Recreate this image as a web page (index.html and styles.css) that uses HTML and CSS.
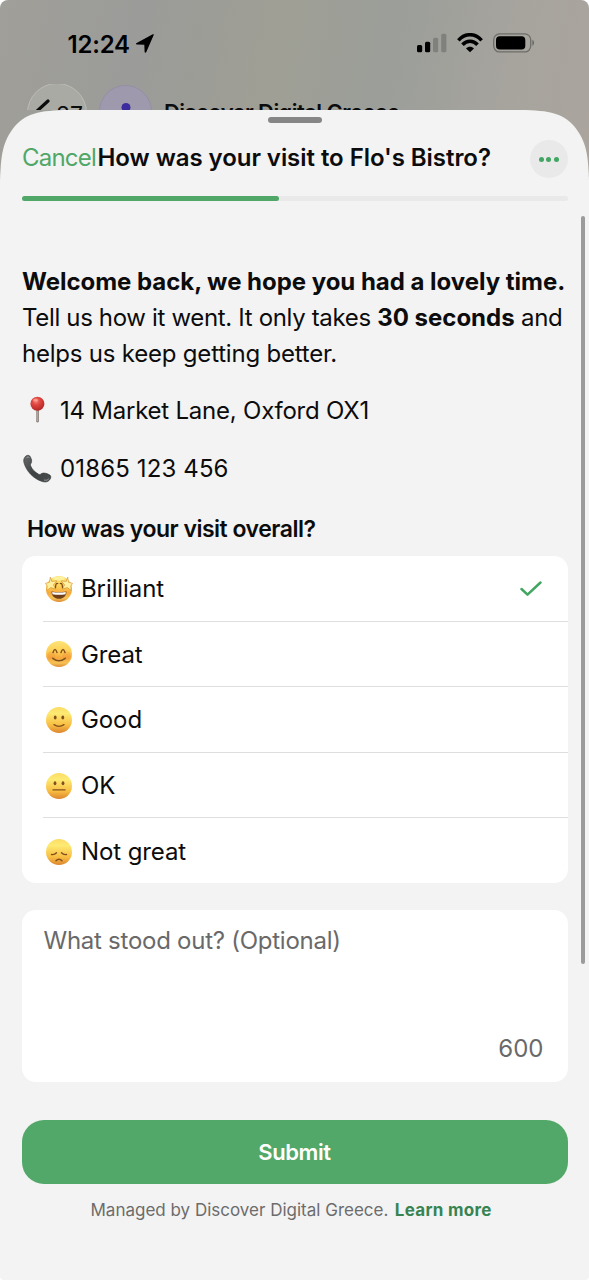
FILE: index.html
```html
<!DOCTYPE html>
<html lang="en">
<head>
<meta charset="utf-8">
<title>How was your visit to Flo's Bistro?</title>
<link rel="stylesheet" href="styles.css">
</head>
<body>
<svg class="defs" width="0" height="0" aria-hidden="true">
  <defs>
    <linearGradient id="face" x1="0" y1="0" x2="0" y2="1">
      <stop offset="0" stop-color="#fbdc66"/><stop offset=".25" stop-color="#fdea72"/><stop offset=".7" stop-color="#f8bd43"/><stop offset="1" stop-color="#dc8630"/>
    </linearGradient>
    <linearGradient id="blush" x1="0" y1="0" x2="0" y2="1">
      <stop offset="0" stop-color="#fce477"/><stop offset=".4" stop-color="#fdcf55"/><stop offset=".65" stop-color="#f5a83c"/><stop offset=".85" stop-color="#f6c255"/><stop offset="1" stop-color="#dc8a35"/>
    </linearGradient>
    <radialGradient id="red" cx=".4" cy=".3" r=".7">
      <stop offset="0" stop-color="#f6877c"/><stop offset=".4" stop-color="#e04740"/><stop offset="1" stop-color="#b52727"/>
    </radialGradient>
    <linearGradient id="phone" x1="0" y1="0" x2="1" y2="1">
      <stop offset="0" stop-color="#666a6b"/><stop offset=".5" stop-color="#3e4243"/><stop offset="1" stop-color="#4a4e4f"/>
    </linearGradient>
  </defs>
</svg>
<div class="screen">
  <header class="backdrop">
    <div class="status">
      <span class="time">12:24</span>
      <svg class="location" width="20" height="20" viewBox="0 0 20 20"><path d="M18.7.9 11.300 18.100c-.5 1-1.600.8-1.700-.3l-.3-7-7-.3C.8 10.400.6 9.400 1.700 8.900L17.300.5c1.200-.6 1.800-.4 1.400.4Z"/></svg>
      <div class="indicators">
        <svg width="30" height="20" viewBox="0 0 30 20"><rect x="0" y="12" width="5.200" height="7.300" rx="1.500"/><rect x="8" y="8.700" width="5.200" height="10.600" rx="1.500"/><g fill="#80817e"><rect x="16" y="4.700" width="5.200" height="14.600" rx="1.500"/><rect x="24.200" y=".8" width="5.200" height="18.500" rx="1.500"/></g></svg>
        <svg width="26" height="20" viewBox="0 0 26 20"><g fill="none" stroke="#000" stroke-width="3.500"><path d="M1.400 7.300C8-.2 18-.2 24.600 7.300"/><path d="M5.500 11.800c4.300-4.700 10.700-4.700 15 0"/></g><path d="M9 15.400c2.200-2.300 5.800-2.300 8 0L13 19.300Z"/></svg>
        <svg width="42" height="20" viewBox="0 0 42 20"><rect x=".7" y=".9" width="37" height="18" rx="5.800" fill="none" stroke="#6d6d69" stroke-width="1.300"/><rect x="3" y="3.200" width="29.300" height="13.400" rx="3.800"/><path d="M39.300 6.700c2.400.8 2.400 5.200 0 6Z" fill="#6d6d69"/></svg>
      </div>
    </div>
    <div class="chatbar">
      <div class="back"><svg width="16" height="26" viewBox="0 0 16 26"><path d="M14 2 2 13l12 11" fill="none" stroke="#0c0c0c" stroke-width="3.200" stroke-linecap="round" stroke-linejoin="round"/></svg><span>27</span></div>
      <div class="avatar"><svg width="30" height="36" viewBox="0 0 30 36"><circle cx="15" cy="4.500" r="4.500"/><path d="M4 32c0-28 22-28 22 0Z"/></svg></div>
      <div class="chatname">Discover Digital Greece</div>
    </div>
  </header>
  <main class="sheet">
    <div class="grabber"></div>
    <nav class="nav">
      <span class="cancel">Cancel</span>
      <h1 class="title">How was your visit to Flo's Bistro?</h1>
      <span class="more"><i></i><i></i><i></i></span>
    </nav>
    <div class="progress"><div class="bar"></div></div>
    <section class="intro">
      <div class="line"><b class="welcome">Welcome back, we hope you had a lovely time.</b></div>
      <div class="line tell">Tell us how it went. It only takes <b>30 seconds</b> and</div>
      <div class="line helps">helps us keep getting better.</div>
    </section>
    <div class="contact">
      <svg width="30" height="30" viewBox="0 0 30 30"><path d="M14 12h3v13.500q-1.500 2-3 0Z" fill="#958b86"/><path d="M14.600 13h.9v12h-.9Z" fill="#c5bfbb"/><circle cx="15.400" cy="7.700" r="7" fill="url(#red)"/><ellipse cx="13.600" cy="4.200" rx="2.400" ry="1.300" fill="#ffb1a8" opacity=".65"/></svg>
      <span class="address">14 Market Lane, Oxford OX1</span>
    </div>
    <div class="contact phone">
      <svg width="30" height="30" viewBox="0 0 30 30"><path d="M2.500 3.700C4 1 7 .5 8.300 2.800c1.300 2.300 1.700 4.300 1 6-.5 1.300-1.300 1.500-.6 3.200 1.400 3.300 4.400 6.400 7.900 8.200 1.500.7 2-.2 3.300-.8 2-.9 5.400 0 8 1.700 1.300.9 1.200 3-.2 4.700-1.600 2.100-4.400 2.700-7.500 1.700C11.200 24.700 4.300 17.100 2 8.800c-.5-2-.3-3.700.5-5.100Z" fill="url(#phone)" stroke="#2d3132" stroke-width=".6"/><path d="M4.200 4.200c1-1.500 2.500-1.600 3.300-.4M22 26c2 .6 3.700.2 4.800-1.200" stroke="#999d9d" fill="none" stroke-width="1"/></svg>
      <span class="number">01865 123 456</span>
    </div>
    <h2 class="question">How was your visit overall?</h2>
    <div class="options">
      <div class="option">
        <svg class="emoji" viewBox="0 0 28 28"><circle cx="14" cy="14" r="13" fill="url(#blush)"/><ellipse cx="14" cy="3.500" rx="6" ry="2" fill="#fff6a8" opacity=".8"/><path d="M6.500 16.500q7.500 1.600 15 0c.1 4-3 7.300-7.500 7.300s-7.600-3.300-7.500-7.300Z" fill="#704018"/><path d="M7.200 16.900q6.800 1.300 13.600 0l-.3 2.300q-6.500 1.200-13 0Z" fill="#fff"/><g fill="#fff0a0" stroke="#cf882a" stroke-width=".6" stroke-linejoin="round"><path d="m5.300 2.200 1.500 4.200 5.100-.5-3.500 4 2.300 4.200-5-1.500-4 3 .5-4.600L.5 8.400l4-1.200Z"/><path d="m22.700 2.200-1.500 4.200-5.100-.5 3.500 4-2.300 4.200 5-1.500 4 3-.5-4.600 1.700-2.600-4-1.200Z"/></g><g fill="none" stroke="#80501c" stroke-width="1.300" stroke-linecap="round"><path d="M10.500 12.500q.2-5 2.200-4M17.500 12.500q-.2-5-2.200-4"/></g></svg>
        <span class="l1">Brilliant</span>
        <svg class="check" width="22" height="16" viewBox="0 0 22 16"><path d="m1.500 8 6 5.700L20.500 1.500" fill="none" stroke="#43a563" stroke-width="2.500" stroke-linecap="round" stroke-linejoin="round"/></svg>
      </div>
      <div class="option">
        <svg class="emoji" viewBox="0 0 28 28"><circle cx="14" cy="14" r="13" fill="url(#blush)"/><circle cx="6.500" cy="15.500" r="4" fill="#f38237" opacity=".25"/><circle cx="21.500" cy="15.500" r="4" fill="#f38237" opacity=".25"/><g fill="none" stroke="#80501c" stroke-width="1.500" stroke-linecap="round"><path d="M8 12.500q2-6 4 0M16 12.500q2-6 4 0M7.800 18.300q6.200 4.800 12.400 0"/></g></svg>
        <span class="l2">Great</span>
      </div>
      <div class="option">
        <svg class="emoji" viewBox="0 0 28 28"><circle cx="14" cy="14" r="13" fill="url(#face)"/><ellipse cx="10.200" cy="11.400" rx="1.400" ry="2" fill="#80501c"/><ellipse cx="17.800" cy="11.400" rx="1.400" ry="2" fill="#80501c"/><path d="M9 18.600q5 3.400 10 0" fill="none" stroke="#80501c" stroke-width="1.300" stroke-linecap="round"/></svg>
        <span class="l3">Good</span>
      </div>
      <div class="option">
        <svg class="emoji" viewBox="0 0 28 28"><circle cx="14" cy="14" r="13" fill="url(#face)"/><ellipse cx="10" cy="11.200" rx="1.400" ry="2" fill="#80501c"/><ellipse cx="18" cy="11.200" rx="1.400" ry="2" fill="#80501c"/><path d="M8 17.900h12" fill="none" stroke="#80501c" stroke-width="1.400" stroke-linecap="round"/></svg>
        <span class="l4">OK</span>
      </div>
      <div class="option">
        <svg class="emoji" viewBox="0 0 28 28"><circle cx="14" cy="14" r="13" fill="url(#face)"/><g fill="none" stroke="#80501c" stroke-width="1.400" stroke-linecap="round"><path d="M6.500 16.500q3 .5 5-1.700M16.500 14.800q2 2.200 5 1.700M11 22.800q3-3.200 6 0"/></g></svg>
        <span class="l5">Not great</span>
      </div>
    </div>
    <div class="comment">
      <span class="placeholder">What stood out? (Optional)</span>
      <span class="count">600</span>
    </div>
    <div class="submit"><span>Submit</span></div>
    <footer class="footer"><span class="managed">Managed by Discover Digital Greece.</span><b>Learn more</b></footer>
    <div class="scrollbar"></div>
  </main>
</div>
</body>
</html>
```
FILE: styles.css
```css
* { box-sizing: border-box; }
body { margin: 0; background: #fff; font-family: Inter, "Liberation Sans", sans-serif; color: #0c0c0d; font-size: 24px; }
svg { display: block; flex: none; }
span, b, h1, h2 { white-space: nowrap; }
.defs { position: absolute; }
.screen { width: 589px; height: 1280px; overflow: hidden; border-radius: 8px 8px 4px 4px; background: linear-gradient(100deg, #a09f99 0%, #9b9b99 24%, #9f9f95 46%, #9b9e99 64%, #a7a49e 84%, #aaa49d 100%) 0 0 / 100% 200px no-repeat; }
.backdrop { height: 110px; }
.status { height: 84px; padding: 28px 54px 0 67.500px; display: flex; align-items: flex-start; }
.time { font-size: 24px; font-weight: 600; line-height: 33px; letter-spacing: -.2px; color: #000; }
.location { margin: 6px 0 0 5px; }
.indicators { display: flex; gap: 10px; margin: 5px 0 0 auto; }
.chatbar { display: flex; height: 26px; padding-left: 27px; overflow: hidden; }
.back { width: 60px; height: 60px; margin-top: -1px; flex: none; border-radius: 50%; border: 1px solid #bcbcb7; background: #a9aaa4; display: flex; padding: 15px 0 0 6px; gap: 6px; font-size: 23px; line-height: 33px; }
.avatar { width: 53px; height: 53px; margin: 1px 0 0 12px; flex: none; border-radius: 50%; background: #9f99ad; border: 1px solid #958ea5; padding: 17px 0 0 11px; fill: #3d2c9e; }
.chatname { margin: 13px 0 0 12px; font-size: 22px; font-weight: 600; line-height: 30px; letter-spacing: -.58px; white-space: nowrap; }
.sheet { position: relative; height: 1170px; background: #f3f3f3; padding: 7px 21.500px 0; clip-path: path("M0 1170V70C1 46 2 32 15 16C28 2 42 0 75 0H514C547 0 561 2 574 16C587 32 588 46 589 70V1170Z"); }
.grabber { width: 54px; height: 6px; margin: 0 auto; border-radius: 3px; background: #858685; }
.nav { display: flex; align-items: center; height: 38px; margin-top: 17px; padding-left: .5px; }
.cancel { color: #50a768; width: 75.500px; letter-spacing: -.8px; line-height: 34px; margin-top: -3px; }
.title { margin: -3px 0 0; font-size: 24px; line-height: 34px; font-weight: 600; letter-spacing: -.05px; }
.more { width: 38px; height: 38px; border-radius: 50%; background: #e9e9e9; margin-left: auto; display: flex; align-items: center; justify-content: center; gap: 2.500px; }
.more i { width: 5px; height: 5px; border-radius: 50%; background: #43a563; }
.progress { height: 5px; margin-top: 18px; border-radius: 3px; background: #e9e9e9; }
.bar { width: 257px; height: 5px; border-radius: 3px; background: #50a768; }
.intro { margin-top: 62px; padding-left: .5px; }
.line { height: 36px; line-height: 37px; white-space: nowrap; }
.welcome { letter-spacing: -.03px; }
.tell { letter-spacing: -.34px; }
.tell b { letter-spacing: 0; }
.helps { letter-spacing: -.21px; }
.contact { display: flex; height: 30px; align-items: center; gap: 8px; margin-top: 25px; padding-left: .5px; line-height: 30px; }
.phone { margin-top: 28px; }
.address { letter-spacing: -.23px; }
.number { letter-spacing: .13px; }
.question { margin: 30px 0 0 5.500px; font-size: 23px; line-height: 30px; font-weight: 600; letter-spacing: -.5px; }
.options { height: 327px; margin-top: 12px; border-radius: 14px; background: #fff; padding-left: 21px; }
.option { height: 65.600px; display: flex; align-items: center; border-bottom: 1px solid #dedede; letter-spacing: -.1px; padding-top: 1px; }
.option:last-child { border: 0; }
.emoji { width: 28px; height: 28px; margin: 0 8.500px 0 2px; }
.check { margin: 0 26px 0 auto; }
.comment { height: 172px; margin-top: 27px; border-radius: 14px; background: #fff; padding: 16px 24px 18px 22px; display: flex; flex-direction: column; justify-content: space-between; color: #69696a; line-height: 30px; }
.placeholder { letter-spacing: -.26px; }
.count { align-self: flex-end; }
.submit { height: 64px; margin-top: 38px; border-radius: 22px; background: #52a868; color: #fff; display: flex; align-items: center; justify-content: center; font-size: 22px; font-weight: 600; letter-spacing: -.4px; }
.footer { display: flex; gap: 6.500px; margin: 14px 0 0 69px; font-size: 17px; line-height: 24px; color: #6c6c6c; }
.footer b { color: #378452; letter-spacing: .27px; }
.scrollbar { position: absolute; top: 106px; left: 581px; width: 4px; height: 748px; border-radius: 2px; background: #9b9b9b; }
```
